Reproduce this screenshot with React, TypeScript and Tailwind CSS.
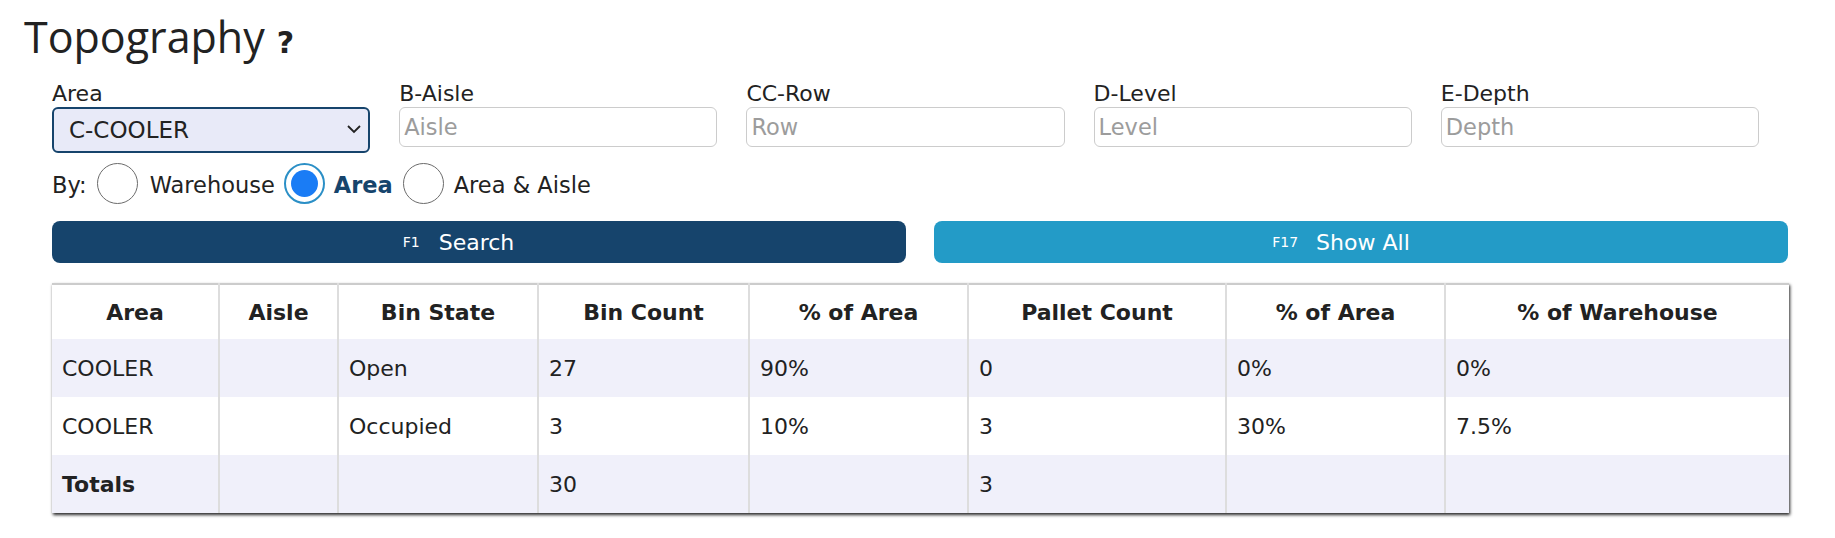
import { useState } from 'react';

const dejavu = "font-['DejaVu_Sans',Verdana,sans-serif]";
const openSans = "font-['Open_Sans','Noto_Sans',sans-serif]";

const fields = [
  { label: 'B-Aisle', placeholder: 'Aisle' },
  { label: 'CC-Row', placeholder: 'Row' },
  { label: 'D-Level', placeholder: 'Level' },
  { label: 'E-Depth', placeholder: 'Depth' },
];

const columns = [
  { name: 'Area', width: 'w-[167px]' },
  { name: 'Aisle', width: 'w-[119px]' },
  { name: 'Bin State', width: 'w-[200px]' },
  { name: 'Bin Count', width: 'w-[211px]' },
  { name: '% of Area', width: 'w-[219px]' },
  { name: 'Pallet Count', width: 'w-[258px]' },
  { name: '% of Area', width: 'w-[219px]' },
  { name: '% of Warehouse', width: 'w-[344px]' },
];

const rows = [
  ['COOLER', '', 'Open', '27', '90%', '0', '0%', '0%'],
  ['COOLER', '', 'Occupied', '3', '10%', '3', '30%', '7.5%'],
];

const totals = ['Totals', '', '', '30', '', '3', '', ''];

function Radio({ checked, onClick }: { checked: boolean; onClick: () => void }) {
  return (
    <button
      onClick={onClick}
      className={`w-[41px] h-[41px] rounded-full bg-white flex items-center justify-center shrink-0 ${
        checked ? 'border-2 border-[#2b8fc6]' : 'border-[1.5px] border-[#6b6b6b]'
      }`}
    >
      {checked && <span className="w-[27px] h-[27px] rounded-full bg-[#1a7cf5]" />}
    </button>
  );
}

export default function App() {
  const [by, setBy] = useState('area');
  const [area, setArea] = useState('C-COOLER');

  return (
    <div className="min-h-screen bg-white text-[#222] px-[24px]">
      <h1 className={`${openSans} text-[43px] leading-[50px] pt-[12px] flex items-baseline`}>
        Topography
        <span className={`${dejavu} font-bold text-[30px] leading-none ml-[12px]`}>?</span>
      </h1>

      <div className="pl-[28px] pr-[23px]">
        {/* Filters */}
        <div className={`${dejavu} grid grid-cols-5 mt-[19px]`}>
          <div className="pr-[29px]">
            <label className="block text-[22px] leading-[26px]">Area</label>
            <div className="relative">
              <select
                value={area}
                onChange={(e) => setArea(e.target.value)}
                className="appearance-none w-full h-[46px] border-2 border-[#16446c] rounded-[6px] bg-[#e8eaf8] pl-[15px] text-[23px] text-[#222] outline-none"
              >
                <option>C-COOLER</option>
                <option>D-DRY</option>
                <option>F-FREEZER</option>
              </select>
              <svg
                className="absolute right-[9px] top-[18px] pointer-events-none"
                width="14"
                height="9"
                viewBox="0 0 14 9"
                fill="none"
                stroke="#222"
                strokeWidth="1.8"
              >
                <polyline points="1,1 7,7 13,1" />
              </svg>
            </div>
          </div>
          {fields.map((f) => (
            <div key={f.label} className="pr-[29px]">
              <label className="block text-[22px] leading-[26px]">{f.label}</label>
              <input
                placeholder={f.placeholder}
                className="w-full h-[40px] border border-[#cccccc] rounded-[6px] px-[4px] text-[22.5px] placeholder:text-[#9c9c9c] outline-none"
              />
            </div>
          ))}
        </div>

        {/* By radios */}
        <div className={`${dejavu} flex items-center h-[41px] mt-[10px] text-[22.5px]`}>
          <span className="mr-[10px] pt-[4px]">By:</span>
          <Radio checked={by === 'warehouse'} onClick={() => setBy('warehouse')} />
          <span className={`ml-[12px] mr-[9px] pt-[4px] ${by === 'warehouse' ? 'font-bold text-[#16446c]' : ''}`}>
            Warehouse
          </span>
          <Radio checked={by === 'area'} onClick={() => setBy('area')} />
          <span className={`ml-[9px] mr-[10px] pt-[4px] ${by === 'area' ? 'font-bold text-[#16446c]' : ''}`}>
            Area
          </span>
          <Radio checked={by === 'aisle'} onClick={() => setBy('aisle')} />
          <span className={`ml-[10px] pt-[4px] ${by === 'aisle' ? 'font-bold text-[#16446c]' : ''}`}>
            Area &amp; Aisle
          </span>
        </div>

        {/* Buttons */}
        <div className={`${dejavu} grid grid-cols-2 gap-[28px] mt-[17px]`}>
          <button className="h-[42px] rounded-[8px] bg-[#16446c] text-white flex items-center justify-center pr-[41px]">
            <span className="text-[14px] mr-[19px]">F1</span>
            <span className="text-[22px]">Search</span>
          </button>
          <button className="h-[42px] rounded-[8px] bg-[#239bc7] text-white flex items-center justify-center pr-[40px]">
            <span className="text-[14px] mr-[18px]">F17</span>
            <span className="text-[22px]">Show All</span>
          </button>
        </div>

        {/* Results */}
        <table
          className={`${dejavu} mt-[20px] w-full table-fixed border-collapse text-[22px] border-t-2 border-[#cccccc] shadow-[1px_2px_3px_rgba(0,0,0,0.85)]`}
        >
          <colgroup>
            {columns.map((c, i) => (
              <col key={i} className={c.width} />
            ))}
          </colgroup>
          <thead>
            <tr className="h-[55px] bg-white">
              {columns.map((c, i) => (
                <th
                  key={i}
                  className={`font-bold text-center ${i < columns.length - 1 ? 'border-r-2 border-[#dddddd]' : ''}`}
                >
                  {c.name}
                </th>
              ))}
            </tr>
          </thead>
          <tbody>
            {rows.map((r, ri) => (
              <tr key={ri} className={`h-[58px] ${ri % 2 === 0 ? 'bg-[#f0f0fa]' : 'bg-white'}`}>
                {r.map((v, i) => (
                  <td
                    key={i}
                    className={`pl-[10px] text-left ${i < r.length - 1 ? 'border-r-2 border-[#dddddd]' : ''}`}
                  >
                    {v}
                  </td>
                ))}
              </tr>
            ))}
            <tr className="h-[58px] bg-[#f0f0fa]">
              {totals.map((v, i) => (
                <td
                  key={i}
                  className={`pl-[10px] text-left ${i === 0 ? 'font-bold' : ''} ${
                    i < totals.length - 1 ? 'border-r-2 border-[#dddddd]' : ''
                  }`}
                >
                  {v}
                </td>
              ))}
            </tr>
          </tbody>
        </table>
      </div>
    </div>
  );
}
